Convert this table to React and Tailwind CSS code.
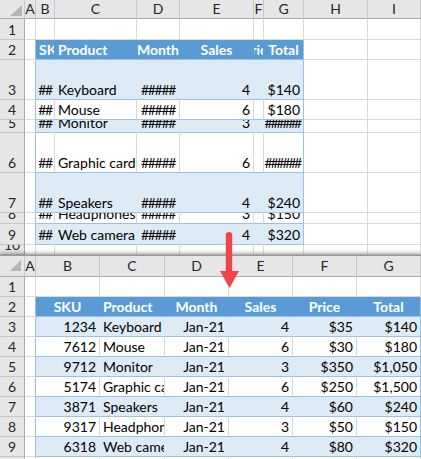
import React from "react";

const LETTERS = ["A", "B", "C", "D", "E", "F", "G", "H", "I"];

const TOP_COLS = ["w-[11px]", "w-[19px]", "w-[82px]", "w-[43px]", "w-[74px]", "w-[10px]", "w-[40px]", "w-[64px]", "w-[53px]"];
const BOTTOM_COLS = ["w-[11px]", "w-[64px]", "w-[65px]", "w-[64px]", "w-[64px]", "w-[64px]", "w-[64px]"];

// table columns are B..G (index 1..6) in both sheets
const TOP_ROWS = [
  { n: "1", h: "h-[21px]" },
  { n: "2", h: "h-[20px]", kind: "head", cells: [["SKU", "l"], ["Product", "l"], ["Month", "c"], ["Sales", "c"], ["Price", "c"], ["Total", "c"]] },
  { n: "3", h: "h-[40px]", kind: "band", cells: [["##", "c"], ["Keyboard", "l"], ["#####", "c"], ["4", "r"], ["", "r"], ["$140", "r"]] },
  { n: "4", h: "h-[20px]", kind: "white", cells: [["##", "c"], ["Mouse", "l"], ["#####", "c"], ["6", "r"], ["", "r"], ["$180", "r"]] },
  { n: "5", h: "h-[13px]", kind: "band", cells: [["##", "c"], ["Monitor", "l"], ["#####", "c"], ["3", "r"], ["", "r"], ["######", "r"]] },
  { n: "6", h: "h-[40px]", kind: "white", cells: [["##", "c"], ["Graphic card", "l"], ["#####", "c"], ["6", "r"], ["", "r"], ["######", "r"]] },
  { n: "7", h: "h-[40px]", kind: "band", cells: [["##", "c"], ["Speakers", "l"], ["#####", "c"], ["4", "r"], ["", "r"], ["$240", "r"]] },
  { n: "8", h: "h-[11px]", kind: "white", cells: [["##", "c"], ["Headphones", "l"], ["#####", "c"], ["3", "r"], ["", "r"], ["$150", "r"]] },
  { n: "9", h: "h-[21px]", kind: "band", cells: [["##", "c"], ["Web camera", "l"], ["#####", "c"], ["4", "r"], ["", "r"], ["$320", "r"]] },
  { n: "10", h: "h-[10px]" },
];

const products = [
  ["1234", "Keyboard", "4", "$35", "$140"],
  ["7612", "Mouse", "6", "$30", "$180"],
  ["9712", "Monitor", "3", "$350", "$1,050"],
  ["5174", "Graphic card", "6", "$250", "$1,500"],
  ["3871", "Speakers", "4", "$60", "$240"],
  ["9317", "Headphones", "3", "$50", "$150"],
  ["6318", "Web camera", "4", "$80", "$320"],
];

const BOTTOM_ROWS = [
  { n: "1", h: "h-[20px]" },
  { n: "2", h: "h-[20px]", kind: "head", cells: [["SKU", "c"], ["Product", "l"], ["Month", "c"], ["Sales", "c"], ["Price", "c"], ["Total", "c"]] },
  ...products.map((p, i) => ({
    n: String(i + 3),
    h: "h-[20px]",
    kind: i % 2 === 0 ? "band" : "white",
    cells: [[p[0], "r"], [p[1], "l"], ["Jan-21", "r"], [p[2], "r"], [p[3], "r"], [p[4], "r"]],
  })),
  { n: "10", h: "h-[20px]" },
];

const KIND = {
  plain: "bg-white border-r border-b border-r-[#d9d9d9] border-b-[#d9d9d9]",
  edge: "bg-white border-r border-b border-r-[#9bc2e6] border-b-[#d9d9d9]",
  head: "bg-[#5b9bd5] border-r border-b border-r-[#5b9bd5] border-b-[#9bc2e6] text-white font-bold",
  headLast: "bg-[#5b9bd5] border-r border-b border-r-[#9bc2e6] border-b-[#9bc2e6] text-white font-bold",
  band: "bg-[#ddebf7] border-r border-b border-r-[#ddebf7] border-b-[#9bc2e6]",
  bandLast: "bg-[#ddebf7] border-r border-b border-r-[#9bc2e6] border-b-[#9bc2e6]",
  white: "bg-white border-r border-b border-r-[#d9d9d9] border-b-[#9bc2e6]",
  whiteLast: "bg-white border-r border-b border-r-[#9bc2e6] border-b-[#9bc2e6]",
};

const ALIGN = {
  l: "justify-start pl-[3px]",
  r: "justify-end pr-[3px]",
  c: "justify-center",
};

function cellKind(row, i) {
  if (!row.kind) return "plain";
  if (i === 0) return "edge";
  if (i >= 1 && i <= 6) return i === 6 ? row.kind + "Last" : row.kind;
  return "plain";
}

function hashClass(t) {
  if (!t.startsWith("#")) return "shrink-0";
  return t.length > 5 ? "shrink-0 tracking-[-2.2px]" : "shrink-0 tracking-[-1.3px]";
}

function Corner({ h, tri }) {
  return (
    <div className={`w-[25px] ${h} shrink-0 bg-[#e6e6e6] border-r border-b border-r-[#c6c6c6] border-b-[#ababab] relative`}>
      <svg className="absolute inset-0" width="25" height="21">
        <polygon points={tri} fill="#b4b4b4" />
      </svg>
    </div>
  );
}

function Sheet({ cols, hdrH, rows, tri }) {
  return (
    <div>
      <div className={`flex ${hdrH}`}>
        <Corner h={hdrH} tri={tri} />
        {cols.map((w, i) => (
          <div
            key={i}
            className={`${w} shrink-0 flex items-center justify-center overflow-hidden bg-[#e6e6e6] border-r border-b border-r-[#c6c6c6] border-b-[#ababab] text-[#262626] text-[14px] leading-[16px]`}
          >
            {LETTERS[i]}
          </div>
        ))}
      </div>
      {rows.map((row) => (
        <div key={row.n} className={`flex ${row.h}`}>
          <div className="w-[25px] shrink-0 flex items-end justify-center overflow-hidden bg-[#e6e6e6] border-r border-b border-r-[#ababab] border-b-[#c6c6c6] text-[#262626] text-[14px] leading-[16px] pb-px">
            {row.n}
          </div>
          {cols.map((w, i) => {
            const c = row.cells && i >= 1 && i <= 6 ? row.cells[i - 1] : null;
            return (
              <div
                key={i}
                className={`${w} shrink-0 flex items-end overflow-hidden whitespace-nowrap text-[14px] leading-[16px] pb-px text-black ${KIND[cellKind(row, i)]} ${c ? ALIGN[c[1]] : ""}`}
              >
                {c ? <span className={hashClass(c[0])}>{c[0]}</span> : null}
              </div>
            );
          })}
        </div>
      ))}
    </div>
  );
}

export default function App() {
  return (
    <div className="relative w-[421px] h-[459px] overflow-hidden bg-white font-['Lato','Liberation_Sans',sans-serif]">
      <div className="h-[255px] overflow-hidden">
        <Sheet cols={TOP_COLS} hdrH="h-[19px]" rows={TOP_ROWS} tri="10,16 22,16 22,5" />
      </div>
      <div className="relative z-10 border-t border-t-[#9a9a9a] shadow-[0_-2px_4px_rgba(0,0,0,0.3)]">
        <Sheet cols={BOTTOM_COLS} hdrH="h-[21px]" rows={BOTTOM_ROWS} tri="10,15 21,15 21,4" />
      </div>
      <svg className="absolute left-[217px] top-[228px] z-20" width="24" height="64" viewBox="0 0 24 64">
        <rect x="8.8" y="4" width="6.4" height="42" rx="3.2" fill="#f0434a" />
        <polygon points="3,43 22,43 12.5,60" fill="#f0434a" />
      </svg>
    </div>
  );
}
